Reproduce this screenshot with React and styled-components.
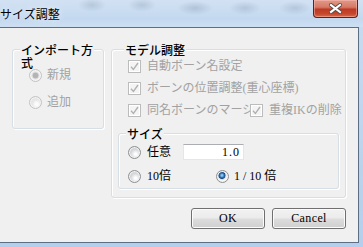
import styled, { createGlobalStyle } from "styled-components";

const GlobalStyle = createGlobalStyle`
  html, body {
    margin: 0;
    padding: 0;
    background: #fff;
  }
  body {
    font-family: "Liberation Serif", "Noto Sans CJK JP", serif;
    overflow: hidden;
  }
`;

const Window = styled.div`
  width: 363px;
  height: 247px;
  display: flex;
  flex-direction: column;
  background: linear-gradient(180deg, #c9dcf0 0%, #b3cfec 100%);
`;

const TitleBar = styled.div`
  height: 27px;
  flex: none;
  display: flex;
  align-items: flex-start;
  background:
    radial-gradient(14px 7px at 92px 5px, rgba(95, 115, 140, 0.22), transparent),
    radial-gradient(14px 7px at 142px 5px, rgba(95, 115, 140, 0.22), transparent),
    radial-gradient(18px 7px at 195px 8px, rgba(95, 115, 140, 0.25), transparent),
    radial-gradient(16px 7px at 245px 8px, rgba(95, 115, 140, 0.22), transparent),
    radial-gradient(16px 7px at 295px 8px, rgba(95, 115, 140, 0.22), transparent),
    linear-gradient(180deg, #d2e2f3 0%, #c3d8ef 70%, #cde0f3 100%);
`;

const Caption = styled.div`
  align-self: center;
  font-family: "Noto Sans CJK JP", sans-serif;
  font-size: 12px;
  line-height: 14px;
  color: #000;
  text-shadow: 0 0 6px rgba(255, 255, 255, 0.9);
`;

const CloseButton = styled.div`
  box-sizing: border-box;
  width: 45px;
  height: 18px;
  margin: 0 5px 0 auto;
  border: 1px solid #5e2219;
  border-top: none;
  border-radius: 0 0 4px 4px;
  background: linear-gradient(180deg, #e2998a 0%, #d57a66 42%, #bd3a24 55%, #c4462d 80%, #d76b4c 100%);
  box-shadow: inset 0 0 0 1px rgba(255, 200, 190, 0.45);
  display: flex;
  align-items: center;
  justify-content: center;
`;

const Client = styled.div`
  flex: 1;
  margin: 0 4px 4px 0;
  background: #f0f0f0;
  border: 1px solid #5d6f84;
  border-left: none;
  padding: 15px 12px 13px 12px;
  display: flex;
  flex-direction: column;
`;

const TopRow = styled.div`
  display: flex;
  gap: 7px;
  align-items: flex-start;
`;

const Group = styled.fieldset`
  box-sizing: border-box;
  margin: 0;
  padding: ${(p) => p.$pad || "0"};
  min-width: 0;
  width: ${(p) => p.$w}px;
  ${(p) => (p.$h ? `height: ${p.$h}px;` : "")}
  border: 1px solid #d5dfe5;
  border-radius: 3px;
  box-shadow: inset 1px 1px 0 #fff, 1px 1px 0 #fff;
`;

const Legend = styled.legend`
  margin-left: ${(p) => (p.$tight ? 6 : 7)}px;
  padding: 0 1px;
  height: 13px;
  font-family: "Noto Sans CJK JP", sans-serif;
  font-size: 12px;
  font-weight: 500;
  line-height: 13px;
  color: #000;
  background: #f0f0f0;
  white-space: nowrap;
`;

const Column = styled.div`
  display: flex;
  flex-direction: column;
  gap: ${(p) => p.$gap}px;
  padding: ${(p) => p.$pad};
`;

const Row = styled.div`
  display: flex;
  align-items: center;
  height: 16px;
`;

const Option = styled.label`
  display: flex;
  align-items: center;
  gap: ${(p) => p.$gap || 6}px;
  height: 16px;
  flex: none;
  ${(p) => (p.$w ? `width: ${p.$w}px; overflow: hidden;` : "")}
  font-size: 12px;
  line-height: 16px;
  white-space: nowrap;
  color: ${(p) => (p.$disabled ? "#a2a2a2" : "#000")};
`;

const Radio = styled.span`
  box-sizing: border-box;
  flex: none;
  width: 13px;
  height: 13px;
  border-radius: 50%;
  border: 1px solid ${(p) => (p.$disabled ? "#c3c3c3" : "#8e8f8f")};
  background: ${(p) =>
    p.$checked
      ? p.$disabled
        ? "radial-gradient(circle at 50% 50%, #b4b4b4 0 2.6px, #dcdcdc 3.2px, #f4f4f4 4.6px)"
        : "radial-gradient(circle at 45% 40%, #8cc3f0 0 0.8px, #2d6fb0 2.2px, #174d86 3.2px, #c9d4df 3.8px, #f6f6f6 5px)"
      : p.$disabled
      ? "radial-gradient(circle at 60% 65%, #fbfbfb 0 1.5px, #e6e6e6 4.5px)"
      : "radial-gradient(circle at 60% 65%, #ffffff 0 1px, #d4d6d9 4.8px)"};
  box-shadow: inset 0 0 0 1px ${(p) => (p.$disabled ? "#f4f4f4" : "#f2f2f2")};
`;

const CheckBox = styled.span`
  box-sizing: border-box;
  flex: none;
  width: 13px;
  height: 13px;
  border: 1px solid #bcbcbc;
  background: #f4f4f4;
  box-shadow: inset 0 0 0 1px #fff;
  display: flex;
  align-items: center;
  justify-content: center;
`;

const TextBox = styled.input`
  box-sizing: border-box;
  width: 61px;
  height: 16px;
  margin: 0;
  padding: 0 3px 0 0;
  border: 1px solid #e2e7ec;
  border-top-color: #abadb3;
  background: #fff;
  font-family: "Liberation Serif", serif;
  font-size: 12px;
  line-height: 14px;
  letter-spacing: 1px;
  text-align: right;
  color: #000;
  outline: none;
`;

const ButtonRow = styled.div`
  display: flex;
  justify-content: flex-end;
  gap: 7px;
  margin-top: 10px;
`;

const Button = styled.button`
  box-sizing: border-box;
  width: 74px;
  height: 21px;
  padding: 0;
  border: 1px solid #707070;
  border-radius: 3px;
  background: linear-gradient(180deg, #f2f2f2 0%, #ebebeb 48%, #dddddd 52%, #cfcfcf 100%);
  box-shadow: inset 0 0 0 1px #fbfbfb;
  font-family: "Liberation Serif", serif;
  font-size: 12px;
  letter-spacing: 0.4px;
  color: #000;
`;

function Check() {
  return (
    <CheckBox>
      <svg width="9" height="9" viewBox="0 0 9 9">
        <path d="M1 4.8 L3.4 7.4 L8 1" fill="none" stroke="#b0b0b0" strokeWidth="1.3" />
      </svg>
    </CheckBox>
  );
}

export default function App() {
  return (
    <>
      <GlobalStyle />
      <Window>
        <TitleBar>
          <Caption>サイズ調整</Caption>
          <CloseButton>
            <svg width="13" height="11" viewBox="0 0 13 11">
              <path d="M2 2 L11 9 M11 2 L2 9" stroke="#5a4a48" strokeWidth="4" strokeLinecap="square" />
              <path d="M2 2 L11 9 M11 2 L2 9" stroke="#fff" strokeWidth="2.2" strokeLinecap="square" />
            </svg>
          </CloseButton>
        </TitleBar>
        <Client>
          <TopRow>
            <Group $w={92} $h={86}>
              <Legend>
                インポート方
                <br />式
              </Legend>
              <Column $gap={11} $pad="11px 0 0 16px">
                <Option $disabled $gap={5}>
                  <Radio $disabled $checked />
                  新規
                </Option>
                <Option $disabled $gap={5}>
                  <Radio $disabled />
                  追加
                </Option>
              </Column>
            </Group>
            <Group $w={235} $pad="0 0 8px 6px">
              <Legend $tight>モデル調整</Legend>
              <Column $gap={6} $pad="2px 0 0 10px">
                <Option $disabled>
                  <Check />
                  自動ボーン名設定
                </Option>
                <Option $disabled>
                  <Check />
                  ボーンの位置調整(重心座標)
                </Option>
                <Row>
                  <Option $disabled $w={122}>
                    <Check />
                    同名ボーンのマージ
                  </Option>
                  <Option $disabled>
                    <Check />
                    重複IKの削除
                  </Option>
                </Row>
              </Column>
              <Group $w={221} style={{ marginTop: 9 }}>
                <Legend>サイズ</Legend>
                <Column $gap={8} $pad="4px 0 4px 9px">
                  <Row>
                    <Option $w={55}>
                      <Radio />
                      任意
                    </Option>
                    <TextBox readOnly defaultValue="1.0" />
                  </Row>
                  <Row>
                    <Option $w={88}>
                      <Radio />
                      10倍
                    </Option>
                    <Option $gap={5}>
                      <Radio $checked />1 / 10 倍
                    </Option>
                  </Row>
                </Column>
              </Group>
            </Group>
          </TopRow>
          <ButtonRow>
            <Button>OK</Button>
            <Button>Cancel</Button>
          </ButtonRow>
        </Client>
      </Window>
    </>
  );
}
